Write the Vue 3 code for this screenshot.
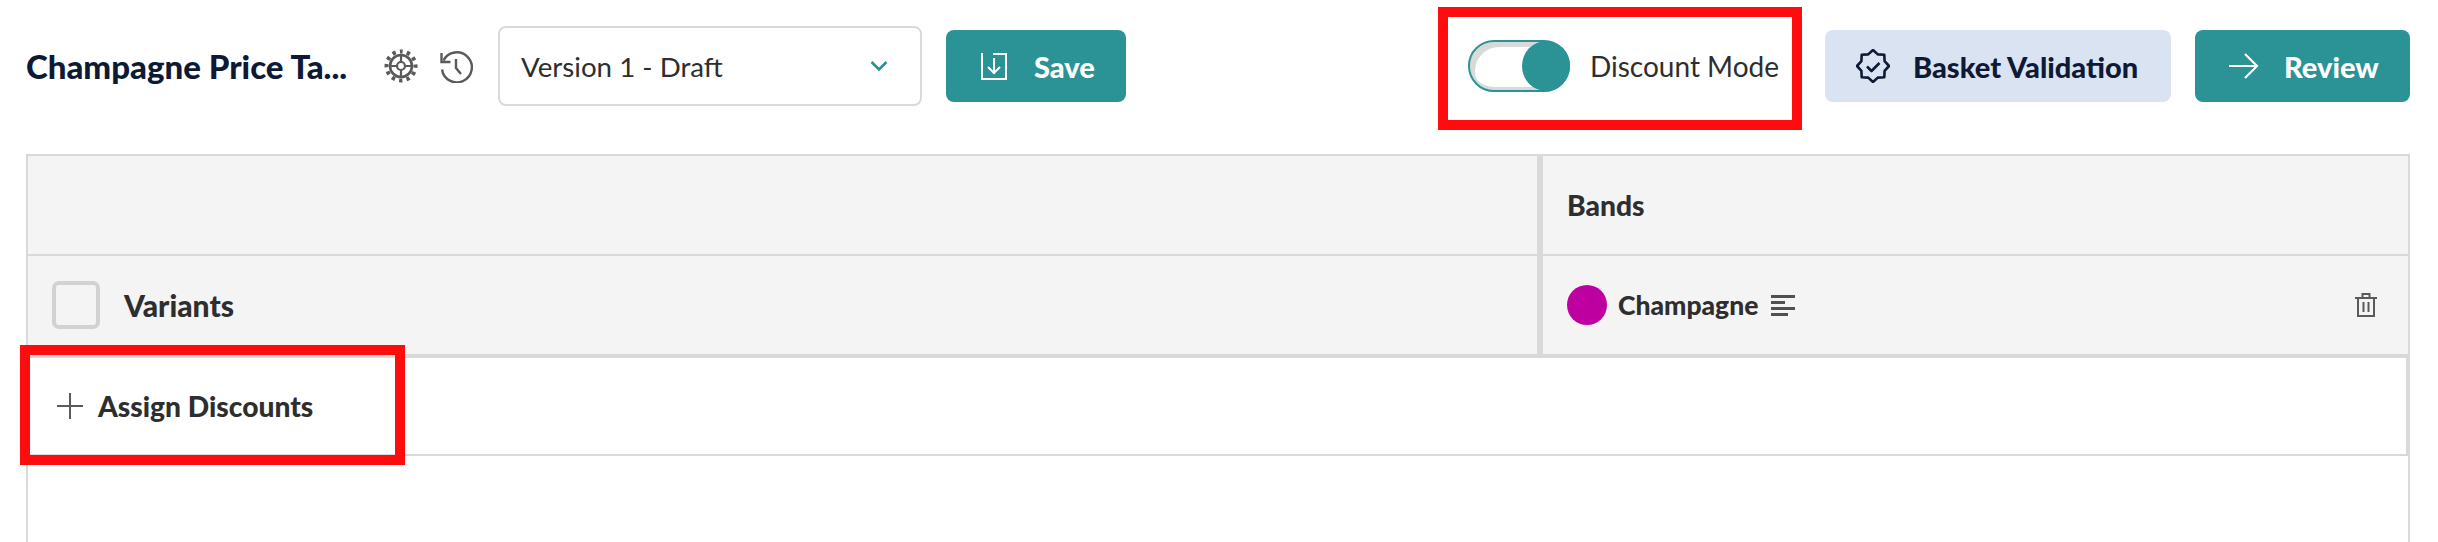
<script setup>
const filterBars = [24, 14, 24, 17]

// 8 pointed badge outline for the basket button
const badge = Array.from({ length: 16 }, (_, i) => {
  const r = i % 2 ? 12.6 : 16
  const a = (i * Math.PI) / 8 - Math.PI / 2
  return `${(17 + r * Math.cos(a)).toFixed(1)},${(17 + r * Math.sin(a)).toFixed(1)}`
}).join(' ')
</script>

<template>
  <div class="page">
    <header class="toolbar">
      <h1 class="title">Champagne Price Ta...</h1>
      <svg class="tool-icon gear" width="34" height="34" viewBox="0 0 34 34" fill="none" stroke="#5a5a5a">
        <circle cx="17" cy="17" r="14.5" stroke-width="4" stroke-dasharray="3.4 4.19" stroke-dashoffset="1.7" transform="rotate(-90 17 17)" />
        <circle cx="17" cy="17" r="11" stroke-width="2.6" />
        <circle cx="17" cy="17" r="4" stroke-width="2.2" />
        <path stroke-width="2.2" d="M17 13V6M17 21v7M13 17H6M21 17h7" />
      </svg>
      <svg class="tool-icon history" width="34" height="34" viewBox="0 0 34 34" fill="none" stroke="#5a5a5a" stroke-width="2.400">
        <path d="M4.500 11.500A15 15 0 1 1 3 20.500" />
        <path d="M2.500 4v9h9" />
        <path d="M17 10v9l5 6" />
      </svg>
      <div class="select">
        <span>Version 1 - Draft</span>
        <svg width="18" height="12" viewBox="0 0 18 12" fill="none" stroke="#2b9296" stroke-width="2.600">
          <path d="M1.500 2 9 9.500 16.500 2" />
        </svg>
      </div>
      <button class="btn teal save">
        <svg width="26" height="27" viewBox="0 0 26 27" fill="none" stroke="#fff" stroke-width="2">
          <path d="M1 0v26h24V1H12" />
          <path d="M13 5v15M7 14l6 6 6-6" />
        </svg>
        Save
      </button>
      <div class="discount">
        <div class="toggle"><span class="knob"></span></div>
        <span>Discount Mode</span>
      </div>
      <button class="btn light basket">
        <svg width="34" height="34" viewBox="0 0 34 34" fill="none" stroke="#0e1a35" stroke-width="2.600" stroke-linejoin="round">
          <polygon :points="badge" />
          <path d="M11 17.500l4.500 4.500 8-8" />
        </svg>
        Basket Validation
      </button>
      <button class="btn teal review">
        <svg width="30" height="26" viewBox="0 0 30 26" fill="none" stroke="#fff" stroke-width="2.200">
          <path d="M0 13h28M16 1l12 12-12 12" />
        </svg>
        Review
      </button>
    </header>

    <section class="table">
      <div class="row head">
        <div class="cell left"></div>
        <div class="cell right"><strong class="bands">Bands</strong></div>
      </div>
      <div class="row variants">
        <div class="cell left">
          <span class="checkbox"></span>
          <strong class="variants-label">Variants</strong>
        </div>
        <div class="cell right">
          <span class="dot"></span>
          <strong class="band">Champagne</strong>
          <span class="bars">
            <i v-for="(w, i) in filterBars" :key="i" :style="{ width: w + 'px' }"></i>
          </span>
          <svg class="trash" width="22" height="24" viewBox="0 0 22 24" fill="none" stroke="#5a5a5a" stroke-width="2">
            <path d="M0 5h22M3 5v18h16V5M7.500 5V1h7v4M8.500 9v10M13.500 9v10" />
          </svg>
        </div>
      </div>
      <div class="row assign">
        <svg width="26" height="26" viewBox="0 0 26 26" stroke="#5a5a5a" stroke-width="2">
          <path d="M13 0v26M0 13h26" />
        </svg>
        <strong class="assign-label">Assign Discounts</strong>
      </div>
    </section>

    <div class="mark mark-toggle"></div>
    <div class="mark mark-assign"></div>
  </div>
</template>

<style>
html, body {
  margin: 0;
  background: #fff;
}
</style>

<style scoped>
.page {
  position: relative;
  width: 2438px;
  height: 542px;
  overflow: hidden;
  background: #fff;
  font-family: Lato, "Liberation Sans", sans-serif;
  font-size: 28px;
  color: #2e2e2e;
}

.toolbar {
  display: flex;
  align-items: center;
  width: 2384px;
  height: 132px;
  padding: 0 28px 22px 26px;
}

.title {
  margin: 0;
  flex: none;
  width: 358px;
  font-size: 33px;
  font-weight: 900;
  color: #0e1a35;
  white-space: nowrap;
}

.tool-icon {
  flex: none;
}

.history {
  margin-left: 21px;
}

.select {
  display: flex;
  flex: none;
  align-items: center;
  justify-content: space-between;
  box-sizing: border-box;
  width: 424px;
  height: 80px;
  margin-left: 25px;
  padding: 0 32px 0 21px;
  border: 2px solid #d9d9d9;
  border-radius: 8px;
  font-size: 27.7px;
}

.btn {
  display: flex;
  flex: none;
  align-items: center;
  box-sizing: border-box;
  height: 72px;
  border: none;
  border-radius: 8px;
  font-family: inherit;
  font-size: 29px;
  font-weight: 900;
  white-space: nowrap;
}

.teal {
  background: #2b9296;
  color: #fff;
}

.light {
  background: #dae3f1;
  color: #0e1a35;
}

.save {
  width: 180px;
  margin-left: 24px;
  padding: 0 0 0 35px;
  gap: 27px;
}

.discount {
  display: flex;
  flex: none;
  align-items: center;
  gap: 20px;
  width: 309px;
  margin-left: 342px;
  white-space: nowrap;
}

.toggle {
  display: flex;
  flex: none;
  justify-content: flex-end;
  align-items: center;
  box-sizing: border-box;
  width: 102px;
  height: 52px;
  border: 2px solid #2b9296;
  border-radius: 26px;
  background: #fff;
  box-shadow: inset 5px 5px 0 #d9d9d9, inset 0 -3px 0 #d9d9d9;
}

.knob {
  width: 48px;
  height: 50px;
  margin-right: -2px;
  border-radius: 50%;
  background: #2b9296;
}

.basket {
  width: 346px;
  margin-left: 48px;
  padding: 0 0 0 31px;
  gap: 23px;
}

.review {
  width: 215px;
  margin-left: 24px;
  padding: 0 0 0 34px;
  gap: 25px;
}

.table {
  box-sizing: border-box;
  width: 2384px;
  height: 388px;
  margin-left: 26px;
  border: 2px solid #d9d9d9;
  border-bottom: none;
}

.row {
  display: flex;
  box-sizing: border-box;
}

.head {
  height: 100px;
  background: #f4f4f4;
  border-bottom: 2px solid #d9d9d9;
}

.variants {
  height: 102px;
  background: #f4f4f4;
  border-bottom: 4px solid #d9d9d9;
}

.assign {
  align-items: center;
  height: 98px;
  padding-left: 29px;
  gap: 15px;
  border-bottom: 2px solid #d9d9d9;
  border-right: 2px solid #d9d9d9;
}

.cell {
  display: flex;
  align-items: center;
  box-sizing: border-box;
}

.left {
  flex: none;
  width: 1515px;
  padding-left: 24px;
  gap: 24px;
  border-right: 6px solid #d9d9d9;
}

.right {
  flex: 1;
  padding-left: 24px;
  padding-right: 31px;
}

strong {
  font-weight: 900;
}

.bands,
.assign-label {
  font-size: 28.2px;
}

.variants-label {
  font-size: 30px;
}

.checkbox {
  box-sizing: border-box;
  width: 48px;
  height: 48px;
  border: 4px solid #d2d2d2;
  border-radius: 7px;
}

.dot {
  width: 40px;
  height: 40px;
  border-radius: 50%;
  background: #bf00a0;
}

.band {
  margin-left: 11px;
  font-size: 26.5px;
}

.bars {
  display: flex;
  flex-direction: column;
  gap: 3px;
  margin-left: 13px;
}

.bars i {
  display: block;
  height: 3px;
  background: #505050;
}

.trash {
  margin-left: auto;
}

.mark {
  position: absolute;
  box-sizing: border-box;
  border: 10px solid #ff0c0e;
}

.mark-toggle {
  left: 1438px;
  top: 7px;
  width: 364px;
  height: 123px;
}

.mark-assign {
  left: 20px;
  top: 345px;
  width: 385px;
  height: 120px;
}
</style>
